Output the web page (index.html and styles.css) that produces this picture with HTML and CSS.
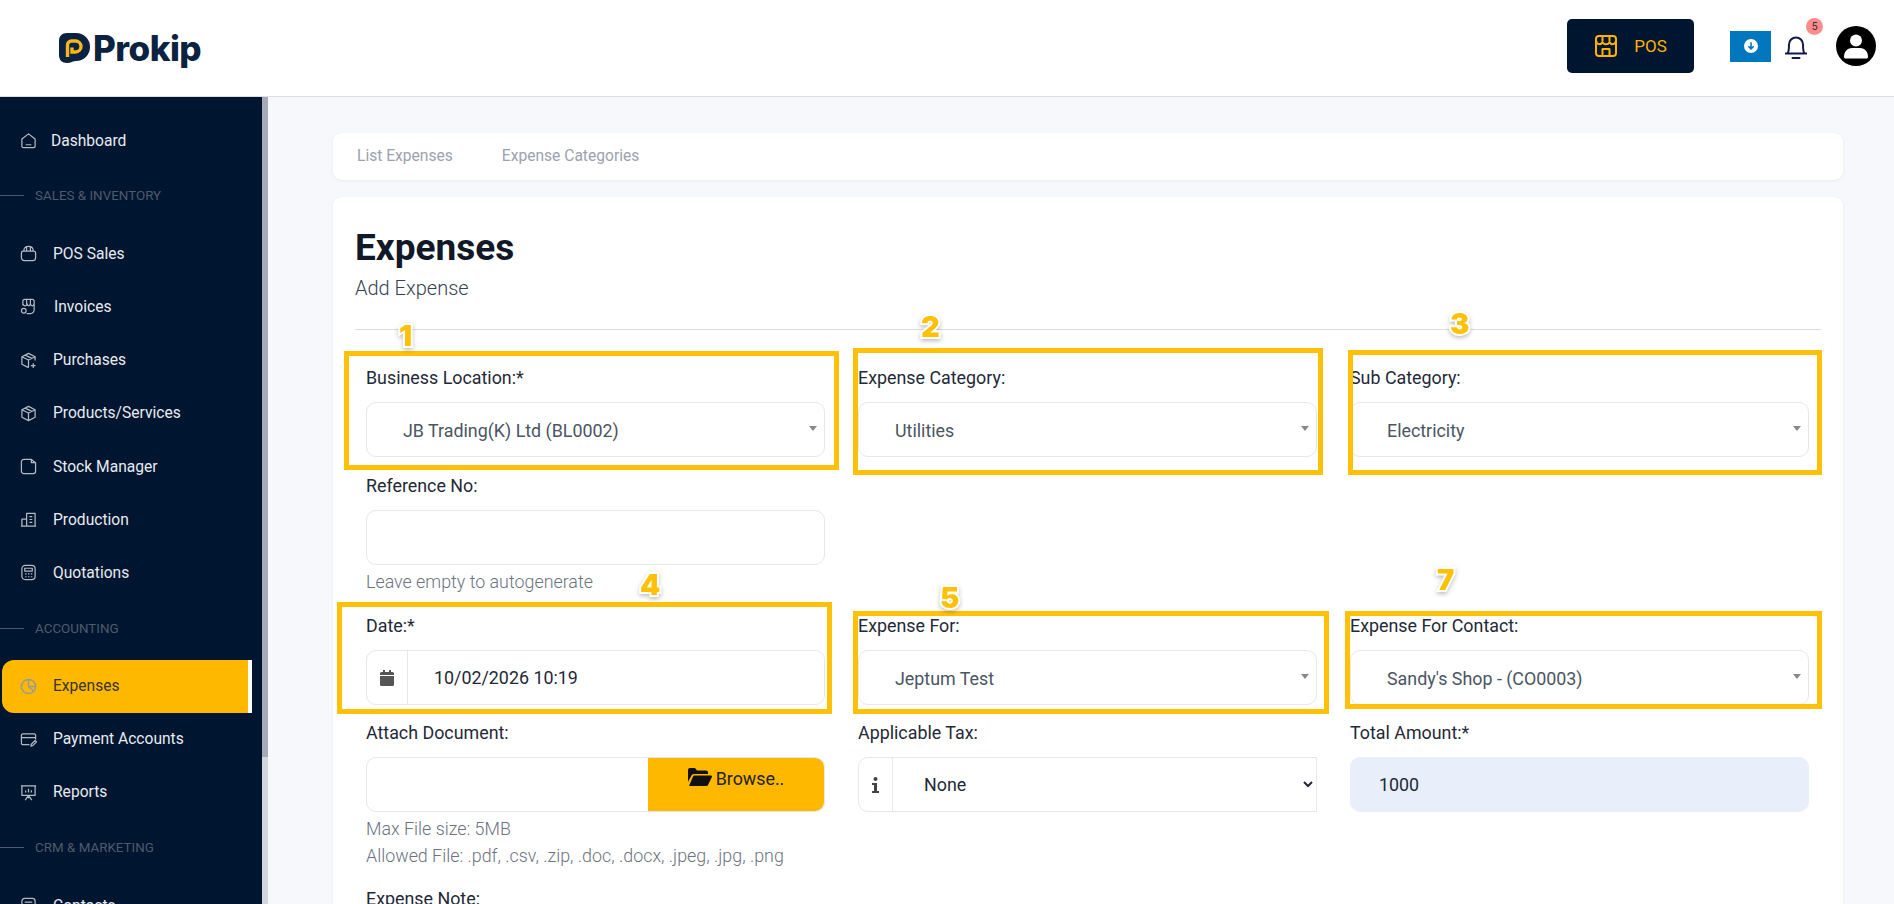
FILE: index.html
```html
<!DOCTYPE html>
<html lang="en">
<head>
  <meta charset="UTF-8">
  <title>Prokip - Add Expense</title>
  <link rel="stylesheet" href="styles.css">
</head>
<body>
<header class="topbar">
  <div class="logo">
    <svg class="logo-mark" viewBox="0 0 32 32"><path d="M9 1h9a14 14 0 0 1 0 28c-3 0-5 2-9 2-5 0-8-3-8-8V9c0-5 3-8 8-8z" fill="#0b2240"/><path d="M9.500 25V13a4 4 0 0 1 4-4h4a5.500 5.500 0 0 1 0 11h-3.500v-4.500" fill="none" stroke="#f5b71c" stroke-width="3.400"/></svg>
    <span class="logo-text">Prokip</span>
  </div>
  <div class="topbar-right">
    <button class="pos-btn">
      <svg width="24" height="24" viewBox="0 0 24 24" fill="none" stroke="#ffb300" stroke-width="2" stroke-linejoin="round"><rect x="2" y="2" width="20" height="20" rx="3"/><path d="M2 7c1 4 5 4 6.500 1 1 3 6 3 7 0 1.500 3 5.500 3 6.500-1M8.500 22v-7h7v7M8.500 3v4M15.500 3v4"/></svg>
      POS
    </button>
    <button class="download-btn">
      <svg width="14" height="14" viewBox="0 0 14 14"><circle cx="7" cy="7" r="7" fill="#fff"/><path d="M7 3.200v6.500M4.300 7.200 7 9.900l2.700-2.700" fill="none" stroke="#0277bd" stroke-width="1.600"/></svg>
    </button>
    <div class="bell">
      <svg width="24" height="26" viewBox="0 0 24 26" fill="none" stroke="#14194f" stroke-width="2"><path d="M1 20.500h22M3.500 20.500c1.500-2 1.500-4 1.500-9a7 7 0 0 1 14 0c0 5 0 7 1.500 9"/><path d="M8.500 25h7" stroke-linecap="round"/></svg>
      <span class="badge">5</span>
    </div>
    <svg class="avatar" width="40" height="40" viewBox="0 0 40 40"><circle cx="20" cy="20" r="20" fill="#000"/><circle cx="20" cy="14.500" r="6" fill="#fff"/><path d="M8 31c0-6 4-9 8-9h8c4 0 8 3 8 9 0 1-1 1.500-2 1.500H10c-1 0-2-.5-2-1.500z" fill="#fff"/></svg>
  </div>
</header>

<div class="layout">
  <aside class="sidebar">
    <nav class="nav">
      <a class="nav-item">
        <svg class="nav-icon" viewBox="0 0 18 18"><path d="M2 7.500 9 2l7 5.500V15a1.500 1.500 0 0 1-1.500 1.500h-11A1.500 1.500 0 0 1 2 15zM6 13.500h6"/></svg>
        <span class="label-dash">Dashboard</span>
      </a>
      <div class="nav-section"><i></i>SALES &amp; INVENTORY</div>
      <a class="nav-item">
        <svg class="nav-icon" viewBox="0 0 18 18"><path d="M4 6.500C4 3 6 1.500 9 1.500s5 1.500 5 5M3.500 6.500h11a2 2 0 0 1 2 2v5a3 3 0 0 1-3 3h-9a3 3 0 0 1-3-3v-5a2 2 0 0 1 1.500-2zM7 2.500v4M11 2.500v4"/></svg>
        <span class="label-pos">POS Sales</span>
      </a>
      <a class="nav-item">
        <svg class="nav-icon" viewBox="0 0 18 18"><path d="M3 8V3.500a2 2 0 0 1 2-2h8a2 2 0 0 1 2 2V12a4 4 0 0 1-4 4.500H7M3 6c1 3 4 3 4.500 0 .5 3 3 3 3.500 0 .5 3 3.500 3 4 0M7 2v4M11 2v4"/><circle cx="4" cy="13.500" r="2.500"/></svg>
        <span class="label-inv">Invoices</span>
      </a>
      <a class="nav-item">
        <svg class="nav-icon" viewBox="0 0 18 18"><path d="M9 16.500 2 13V5l7-3.500L16 5v4M2 5l7 3.500L16 5M9 8.500v8M5.500 3.300l7 3.500M14 12v5M11.500 14.500h5"/></svg>
        <span>Purchases</span>
      </a>
      <a class="nav-item">
        <svg class="nav-icon" viewBox="0 0 18 18"><path d="M9 1.500 16 5v8l-7 3.500L2 13V5zM2 5l7 3.500L16 5M9 8.500v8M5.500 3.300l7 3.500"/></svg>
        <span>Products/Services</span>
      </a>
      <a class="nav-item">
        <svg class="nav-icon" viewBox="0 0 18 18"><path d="M4 1.500h8l4.500 3.500v9a2.500 2.500 0 0 1-2.500 2.500H4A2.500 2.500 0 0 1 1.500 14V4A2.500 2.500 0 0 1 4 1.500zM12 1.500V5h4.500"/></svg>
        <span>Stock Manager</span>
      </a>
      <a class="nav-item">
        <svg class="nav-icon" viewBox="0 0 18 18"><path d="M2 16V8.500h5M7 16V2.500h9V16zM1 16h16M10 6h3M10 9h3M10 12h3"/></svg>
        <span>Production</span>
      </a>
      <a class="nav-item">
        <svg class="nav-icon" viewBox="0 0 18 18"><rect x="2" y="1.500" width="14" height="15" rx="3.500"/><rect x="5" y="4.500" width="8" height="3"/><path d="M5.500 10.500h1.500M8.500 10.500H10M11.500 10.500H13M5.500 13.500h1.500M8.500 13.500H10M11.500 13.500H13"/></svg>
        <span>Quotations</span>
      </a>
      <div class="nav-section"><i></i>ACCOUNTING</div>
      <a class="nav-item active">
        <svg class="nav-icon" viewBox="0 0 18 18"><circle cx="9" cy="9" r="7.500"/><path d="M9 1.500V9l5.500 5M9 9h7.500"/></svg>
        <span>Expenses</span>
      </a>
      <a class="nav-item">
        <svg class="nav-icon" viewBox="0 0 18 18"><path d="M10 14.500H3A1.500 1.500 0 0 1 1.500 13V4.500A1.500 1.500 0 0 1 3 3h12a1.500 1.500 0 0 1 1.500 1.500V9M1.500 7h15M11.500 16l.5-2 4-4 1.500 1.500-4 4z"/></svg>
        <span>Payment Accounts</span>
      </a>
      <a class="nav-item">
        <svg class="nav-icon" viewBox="0 0 18 18"><path d="M2 2h14v10H2zM1 2h16M5.500 17 9 12l3.500 5M9 12v3M6 9V7M9 9V5M12 9V6.500"/></svg>
        <span>Reports</span>
      </a>
      <div class="nav-section"><i></i>CRM &amp; MARKETING</div>
      <a class="nav-item">
        <svg class="nav-icon" viewBox="0 0 18 18"><rect x="2" y="1.500" width="14" height="15" rx="3"/><path d="M5 5.500h8M5 9h8"/></svg>
        <span>Contacts</span>
      </a>
    </nav>
    <div class="scrollbar"><div class="scroll-thumb"></div></div>
  </aside>

  <main class="content">
    <div class="tabs">
      <a>List Expenses</a>
      <a>Expense Categories</a>
    </div>
    <section class="card">
      <h1>Expenses</h1>
      <p class="subtitle">Add Expense</p>
      <hr class="divider">
      <form class="form-grid">
        <div class="field">
          <label>Business Location:*</label>
          <div class="select2">JB Trading(K) Ltd (BL0002)</div>
        </div>
        <div class="field">
          <label>Expense Category:</label>
          <div class="select2">Utilities</div>
        </div>
        <div class="field">
          <label>Sub Category:</label>
          <div class="select2">Electricity</div>
        </div>

        <div class="field row-start ref-field">
          <label>Reference No:</label>
          <input class="text-input" type="text">
          <p class="help">Leave empty to autogenerate</p>
        </div>

        <div class="field row-start tight">
          <label>Date:*</label>
          <div class="input-group">
            <span class="addon">
              <svg width="14" height="16" viewBox="0 0 14 16" fill="#555"><path d="M3 0h2v2h4V0h2v2h1.500A1.500 1.500 0 0 1 14 3.500V5H0V3.500A1.500 1.500 0 0 1 1.500 2H3zM0 6h14v8.500a1.500 1.500 0 0 1-1.500 1.500h-11A1.500 1.500 0 0 1 0 14.500z"/></svg>
            </span>
            <input class="group-input" type="text" value="10/02/2026 10:19">
          </div>
        </div>
        <div class="field tight">
          <label>Expense For:</label>
          <div class="select2">Jeptum Test</div>
        </div>
        <div class="field tight">
          <label>Expense For Contact:</label>
          <div class="select2">Sandy's Shop - (CO0003)</div>
        </div>

        <div class="field attach-field">
          <label>Attach Document:</label>
          <div class="file-input">
            <span class="file-name"></span>
            <span class="browse">
              <svg width="24" height="18" viewBox="0 0 24 18" fill="#111"><path d="M0 14V2a2 2 0 0 1 2-2h5l2 2.500h9a2 2 0 0 1 2 2V6H6a3 3 0 0 0-2.800 2zM1 18l4-9.500a1.500 1.500 0 0 1 1.400-1H23a1 1 0 0 1 .9 1.400L20 17a1.500 1.500 0 0 1-1.400 1z"/></svg>
              Browse..
            </span>
          </div>
          <p class="help">Max File size: 5MB</p>
          <p class="help">Allowed File: .pdf, .csv, .zip, .doc, .docx, .jpeg, .jpg, .png</p>
        </div>
        <div class="field">
          <label>Applicable Tax:</label>
          <div class="input-group square-end">
            <span class="addon tax-addon">
              <svg width="7" height="16" viewBox="0 0 7 16" fill="#444"><circle cx="3.500" cy="2" r="2"/><path d="M0 6h5v8h2v2H0v-2h2V8H0z"/></svg>
            </span>
            <select class="group-select"><option>None</option></select>
          </div>
        </div>
        <div class="field">
          <label>Total Amount:*</label>
          <input class="text-input filled" type="text" value="1000">
        </div>

        <div class="field row-start">
          <label>Expense Note:</label>
        </div>
      </form>
    </section>
  </main>
</div>

<div class="mark-box box-1"></div>
<div class="mark-box box-2"></div>
<div class="mark-box box-3"></div>
<div class="mark-box box-4"></div>
<div class="mark-box box-5"></div>
<div class="mark-box box-7"></div>
<span class="mark-num num-1">1</span>
<span class="mark-num num-2">2</span>
<span class="mark-num num-3">3</span>
<span class="mark-num num-4">4</span>
<span class="mark-num num-5">5</span>
<span class="mark-num num-7">7</span>
</body>
</html>
```

FILE: styles.css
```css
* {
  box-sizing: border-box;
}
html, body {
  height: 904px;
  overflow: hidden;
}
body {
  margin: 0;
  position: relative;
  font-family: 'Roboto', sans-serif;
  font-size: 17.85px;
  color: #1f2937;
  background: #f7f8fc;
}

/* top bar */
.topbar {
  height: 97px;
  display: flex;
  align-items: center;
  justify-content: space-between;
  padding: 0 18px 4px 58px;
  background: #fff;
  border-bottom: 1px solid #dcdee3;
}
.logo {
  display: flex;
  align-items: center;
  gap: 3px;
  margin-top: 4px;
}
.logo-mark {
  width: 32px;
  height: 32px;
}
.logo-text {
  font-family: 'Inter', sans-serif;
  font-size: 35px;
  font-weight: 800;
  letter-spacing: -0.5px;
  color: #0b2240;
  line-height: 40px;
}
.topbar-right {
  display: flex;
  align-items: center;
}
.pos-btn {
  width: 127px;
  height: 54px;
  margin-right: 36px;
  display: flex;
  align-items: center;
  justify-content: center;
  gap: 16px;
  background: #00152f;
  color: #ffb300;
  border: none;
  border-radius: 5px;
  font-family: inherit;
  font-size: 17px;
}
.download-btn {
  width: 41px;
  height: 31px;
  margin-right: 13px;
  display: flex;
  align-items: center;
  justify-content: center;
  padding: 0;
  background: #0277bd;
  border: none;
}
.bell {
  position: relative;
  width: 24px;
  height: 26px;
  margin-right: 28px;
}
.badge {
  position: absolute;
  top: -15px;
  left: 22px;
  width: 17px;
  height: 17px;
  border-radius: 50%;
  background: #ff8c8c;
  color: #333;
  font-size: 11px;
  line-height: 17px;
  text-align: center;
}

.layout {
  display: flex;
  height: 807px;
}

/* sidebar */
.sidebar {
  width: 268px;
  flex-shrink: 0;
  display: flex;
  background: #00152f;
}
.nav {
  width: 262px;
  padding-top: 17px;
}
.nav-item {
  height: 53.2px;
  display: flex;
  align-items: center;
  gap: 16px;
  padding-left: 20px;
  margin-right: 10px;
  font-size: 15.6px;
  color: #e8ebf0;
}
.nav-item .label-dash {
  margin-left: -2px;
}
.nav-item .label-inv {
  margin-left: 1px;
}
.nav-icon {
  width: 17px;
  height: 17px;
  flex-shrink: 0;
  fill: none;
  stroke: #b4b9c2;
  stroke-width: 1.300;
  stroke-linejoin: round;
}
.nav-item.active {
  margin-left: 2px;
  padding-left: 18px;
  background: #ffb800;
  border-right: 4px solid #fff;
  border-radius: 12px 0 0 12px;
  color: #39352a;
}
.nav-item.active .nav-icon {
  stroke: #9c9d92;
  stroke-width: 1.600;
}
.nav-section {
  height: 60px;
  padding-bottom: 3px;
  display: flex;
  align-items: center;
  gap: 11px;
  font-size: 13.4px;
  color: #4f5a6d;
}
.nav-section i {
  width: 24px;
  height: 1px;
  background: #4f5a6d;
}
.scrollbar {
  width: 6px;
  background: #d3d5dc;
}
.scroll-thumb {
  height: 660px;
  background: #a4abb7;
}

/* content */
.content {
  flex: 1;
  padding: 36px 51px 0 65px;
  overflow: hidden;
}
.tabs {
  height: 47px;
  display: flex;
  align-items: center;
  gap: 49px;
  padding: 0 0 2px 24px;
  background: #fff;
  border-radius: 9px;
  box-shadow: 0 1px 4px rgba(20, 30, 60, 0.06);
  font-size: 15.6px;
  color: #9ba2ae;
}
.card {
  margin-top: 17px;
  padding: 31px 22px 0 22px;
  height: 760px;
  background: #fff;
  border-radius: 9px;
  box-shadow: 0 1px 4px rgba(20, 30, 60, 0.06);
}
h1 {
  margin: 0;
  font-size: 37px;
  line-height: 40px;
  font-weight: 700;
  color: #111827;
}
.subtitle {
  margin: 6px 0 0;
  font-size: 20px;
  line-height: 28px;
  font-weight: 300;
  color: #374151;
}
.divider {
  margin: 27px 0 0;
  border: none;
  border-top: 1px solid #dcdde2;
}

/* form */
.form-grid {
  display: grid;
  grid-template-columns: repeat(3, 459px);
  column-gap: 33px;
  margin: 36px 0 0 11px;
  align-items: start;
}
.row-start {
  grid-column: 1;
}
.field {
  margin-bottom: 17px;
}
.ref-field {
  margin-bottom: 22px;
}
.tight {
  margin-bottom: 16px;
}
.attach-field {
  margin-bottom: 21px;
}
.field label {
  display: block;
  height: 24px;
  margin-bottom: 12px;
  line-height: 24px;
  color: #1f2937;
}
.select2, .text-input, .input-group, .file-input {
  width: 100%;
  height: 55px;
  background: #fff;
  border: 1px solid #e5e7eb;
  border-radius: 10px;
}
.select2 {
  position: relative;
  padding-left: 36px;
  line-height: 55px;
  color: #4b5563;
}
.select2::after {
  content: "";
  position: absolute;
  top: 23px;
  right: 7px;
  border: 4px solid transparent;
  border-top: 5px solid #888;
  border-bottom: none;
}
.text-input {
  display: block;
  padding: 0 28px;
  font-family: inherit;
  font-size: 17.85px;
  color: #1f2937;
  outline: none;
}
.text-input.filled {
  background: #e8eefa;
  border-color: #e8eefa;
}
.help {
  margin: 7px 0 0;
  line-height: 20px;
  font-weight: 300;
  color: #6b7280;
}
.input-group {
  display: flex;
  overflow: hidden;
}
.input-group.square-end {
  border-radius: 10px 0 0 10px;
}
.addon {
  width: 41px;
  flex-shrink: 0;
  display: flex;
  align-items: center;
  justify-content: center;
  border-right: 1px solid #e5e7eb;
}
.tax-addon {
  width: 34px;
}
.group-input {
  flex: 1;
  min-width: 0;
  padding: 0 26px;
  border: none;
  outline: none;
  font-family: inherit;
  font-size: 17.85px;
  color: #1f2937;
}
.group-select {
  flex: 1;
  min-width: 0;
  padding-left: 27px;
  border: none;
  outline: none;
  background: #fff;
  font-family: inherit;
  font-size: 17.85px;
  color: #1f2937;
}
.file-input {
  display: flex;
  overflow: hidden;
}
.file-name {
  flex: 1;
}
.browse {
  width: 176px;
  display: flex;
  align-items: flex-start;
  justify-content: center;
  gap: 4px;
  padding-top: 10px;
  background: #ffb800;
  color: #222;
}

/* yellow marks drawn over the screenshot */
.mark-box {
  position: absolute;
  border: 5px solid #ffc107;
}
.box-1 { left: 344px; top: 351px; width: 495px; height: 119px; }
.box-2 { left: 853px; top: 348px; width: 470px; height: 127px; }
.box-3 { left: 1348px; top: 350px; width: 474px; height: 125px; }
.box-4 { left: 337px; top: 602px; width: 495px; height: 112px; }
.box-5 { left: 853px; top: 611px; width: 476px; height: 103px; }
.box-7 { left: 1345px; top: 611px; width: 477px; height: 98px; }
.mark-num {
  position: absolute;
  font-family: 'Inter', sans-serif;
  font-size: 29px;
  font-weight: 900;
  line-height: 30px;
  color: #ffc107;
  -webkit-text-stroke: 4px #fff;
  paint-order: stroke fill;
  filter: drop-shadow(0 2px 2px rgba(0, 0, 0, 0.25));
}
.num-1 { left: 399px; top: 321px; }
.num-2 { left: 921px; top: 312px; }
.num-3 { left: 1450px; top: 309px; }
.num-4 { left: 640px; top: 570px; }
.num-5 { left: 940px; top: 583px; }
.num-7 { left: 1437px; top: 565px; }
```
